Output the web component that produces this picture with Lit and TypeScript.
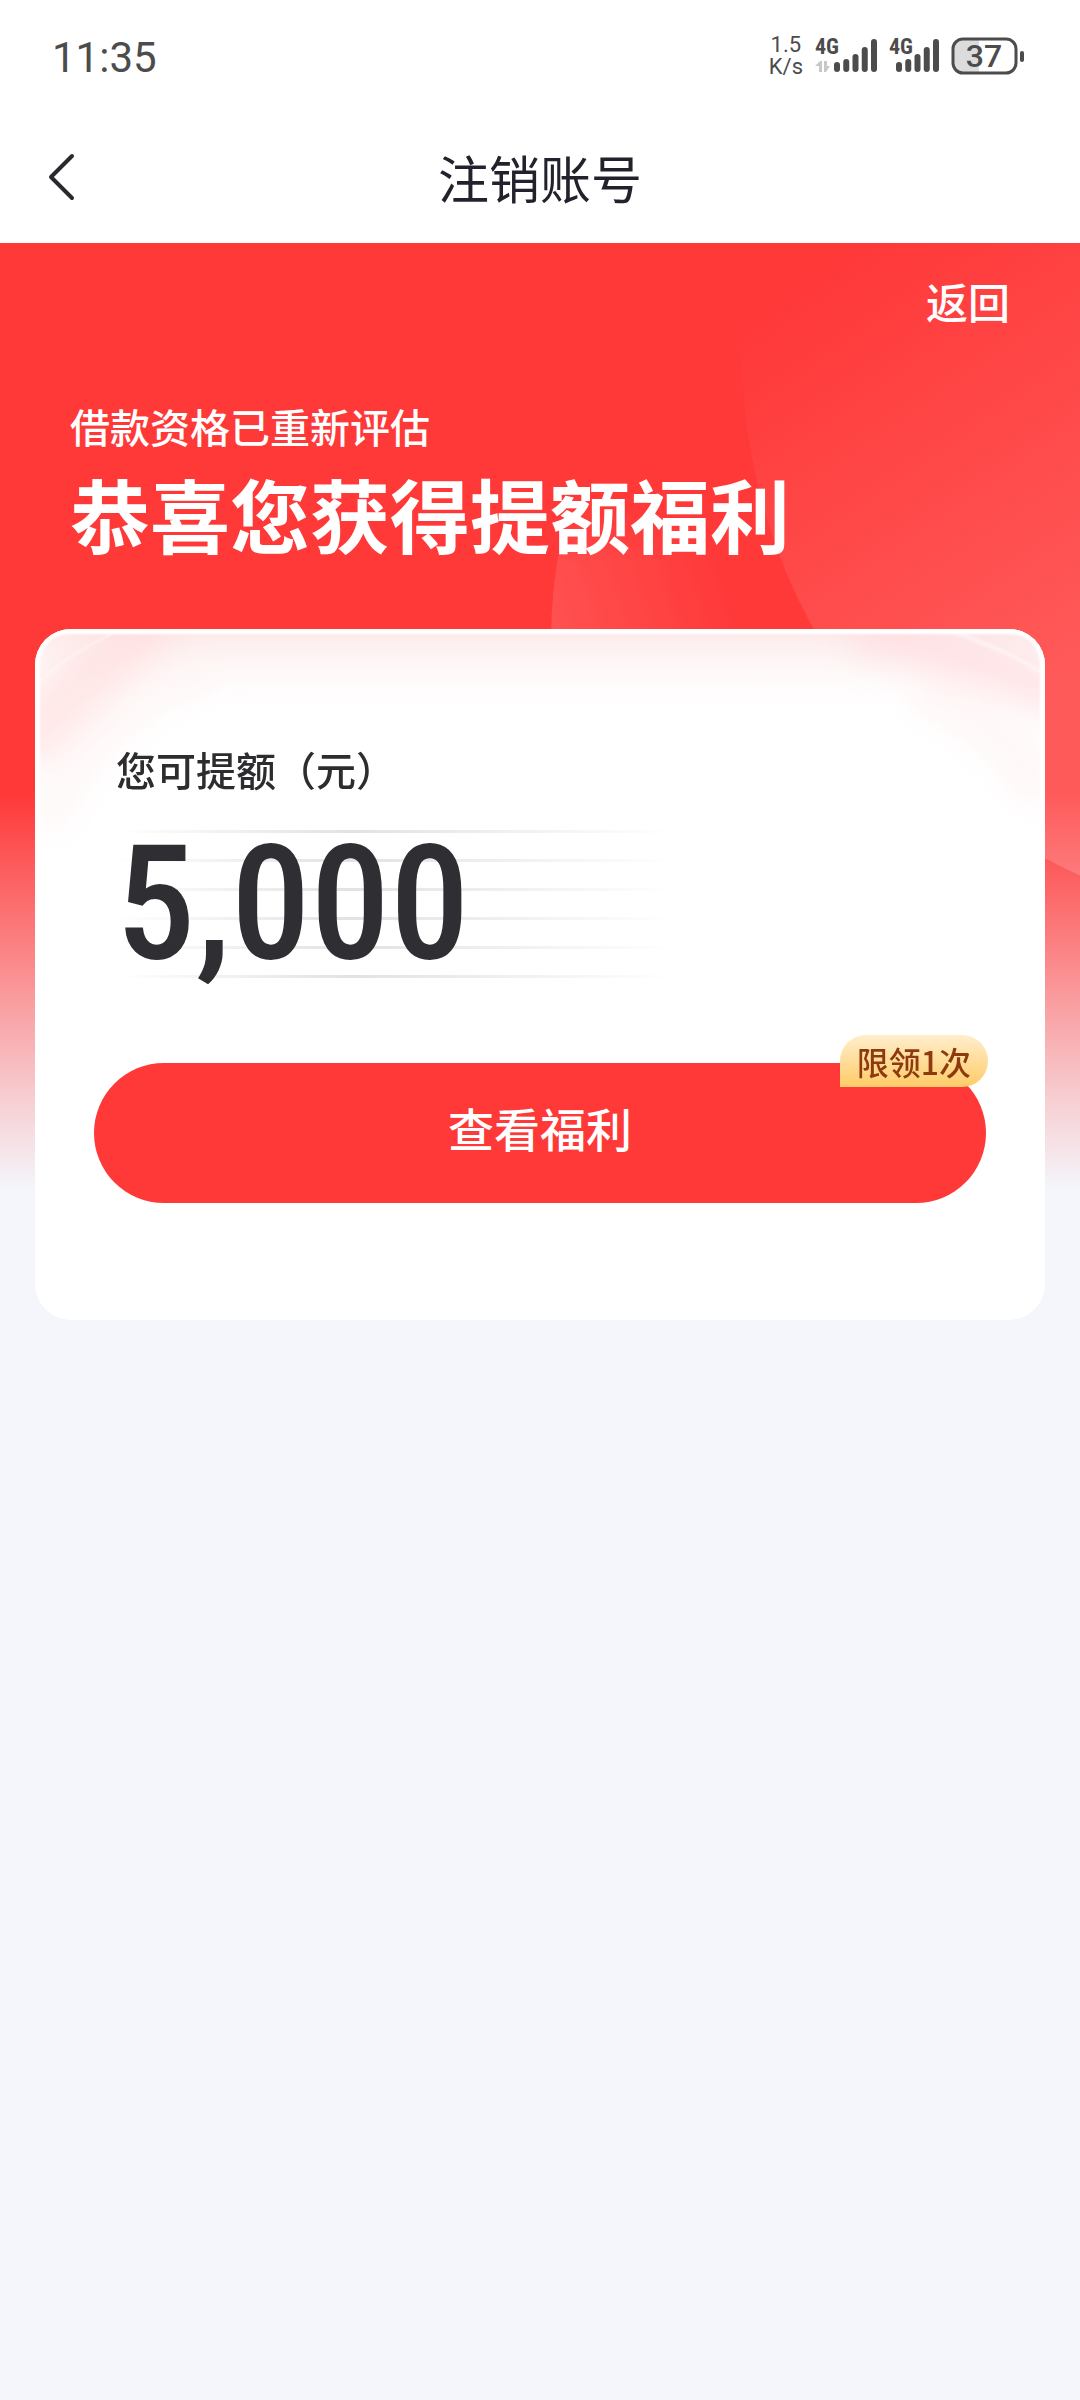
import { LitElement, html, css, svg } from "lit";
import { customElement, property } from "lit/decorators.js";

const BARS = [10, 13, 18, 25, 33];

@customElement("signal-icon")
class SignalIcon extends LitElement {
  @property({ type: Boolean }) arrows = false;

  static styles = css`
    :host {
      display: block;
    }
    .icon {
      display: block;
    }
    .label {
      font: 700 22px "Roboto Condensed", "Liberation Sans Narrow", Roboto, sans-serif;
      fill: #4c4c4c;
    }
  `;

  render() {
    const start = this.arrows ? 19 : 7;
    return html`
      <svg class="icon" width=${start + 43} height="54" aria-hidden="true">
        <text class="label" x="0" y="25">4G</text>
        ${this.arrows
          ? svg`<path d="M0 37L5 32H7V43H4V37ZM9 32H12V37H15L11 43H9Z" fill="#c8c8c8" />`
          : null}
        ${BARS.map(
          (h, i) =>
            svg`<rect x=${start + i * 9.25} y=${43 - h} width="6" height=${h} rx="3" fill="#4c4c4c" />`
        )}
      </svg>
    `;
  }
}

@customElement("status-bar")
class StatusBar extends LitElement {
  static styles = css`
    :host {
      display: flex;
      align-items: center;
      justify-content: space-between;
      height: 116px;
      padding: 0 55px 0 52px;
      box-sizing: border-box;
      background: #fff;
      color: #4c4c4c;
      font-family: Roboto, sans-serif;
    }
    .time {
      font-size: 42px;
      line-height: 48px;
    }
    .right {
      display: flex;
      align-items: center;
      gap: 12px;
      height: 112px;
      align-self: flex-start;
    }
    .speed {
      font-size: 22px;
      line-height: 22px;
      text-align: center;
    }
    .battery {
      display: block;
    }
    .level {
      font: 500 32px Roboto, sans-serif;
      fill: #4c4c4c;
    }
  `;

  render() {
    return html`
      <span class="time">11:35</span>
      <div class="right">
        <div class="speed">1.5<br />K/s</div>
        <signal-icon arrows></signal-icon>
        <signal-icon></signal-icon>
        <svg class="battery" width="74" height="38" aria-label="37%">
          <path d="M11 2H28V36H11Q2 36 2 27V11Q2 2 11 2Z" fill="#dcdcdc" />
          <rect x="2" y="2" width="63" height="34" rx="10" fill="none" stroke="#4c4c4c" stroke-width="3" />
          <rect x="69" y="14" width="4" height="11" rx="2" fill="#4c4c4c" />
          <text class="level" x="33" y="30" text-anchor="middle">37</text>
        </svg>
      </div>
    `;
  }
}

@customElement("quota-card")
class QuotaCard extends LitElement {
  @property() amount = "5,000";

  static styles = css`
    :host {
      display: block;
      position: relative;
      overflow: hidden;
      box-sizing: border-box;
      padding: 110px 59px 117px;
      border-radius: 36px;
      background: #fff;
    }
    .glow {
      position: absolute;
      inset: 0 0 auto;
      width: 100%;
      height: 260px;
    }
    .content {
      position: relative;
    }
    .label {
      margin: 0 22px;
      font-size: 40px;
      font-weight: 500;
      line-height: 60px;
      color: #2d2d2f;
    }
    .figure {
      display: grid;
      align-items: center;
      margin: 31px 22px 85px;
      height: 148px;
    }
    .rules,
    .amount {
      grid-area: 1 / 1;
    }
    .rules {
      width: 66%;
      height: 148px;
      background: repeating-linear-gradient(#e2e2e4 0 3px, transparent 3px 29px);
      -webkit-mask-image: linear-gradient(90deg, transparent, #000 42%, transparent);
      mask-image: linear-gradient(90deg, transparent, #000 42%, transparent);
    }
    .amount {
      position: relative;
      font: 500 159px/148px "Roboto Condensed", "Liberation Sans Narrow", Roboto, sans-serif;
      color: #2f2f33;
    }
    .action {
      position: relative;
    }
    .button {
      display: block;
      width: 100%;
      height: 140px;
      padding: 0 0 12px;
      border: 0;
      border-radius: 70px;
      background: #ff3838;
      color: #fff;
      font: inherit;
      font-size: 46px;
      font-weight: 500;
    }
    .badge {
      position: absolute;
      top: -28px;
      right: -2px;
      padding: 0 17px;
      border-radius: 26px 26px 26px 0;
      background: linear-gradient(#ffeecb, #ffcb68);
      color: #8f3a0c;
      font-size: 32px;
      font-weight: 500;
      line-height: 52px;
    }
  `;

  render() {
    return html`
      <svg class="glow" viewBox="0 0 1010 260" preserveAspectRatio="none" aria-hidden="true">
        <defs>
          <linearGradient id="veil" x1="0" y1="0" x2="0" y2="1">
            <stop offset="0" stop-color="#fde8e8" />
            <stop offset="1" stop-color="#fff" stop-opacity="0" />
          </linearGradient>
          <filter id="soft" x="-50%" y="-50%" width="200%" height="200%">
            <feGaussianBlur stdDeviation="16" />
          </filter>
          <filter id="fine"><feGaussianBlur stdDeviation="1" /></filter>
        </defs>
        <rect width="1010" height="92" fill="url(#veil)" />
        <g fill="none" filter="url(#soft)">
          <path d="M-20 120Q50 50 130 -20" stroke="#ffdede" stroke-width="60" opacity=".7" />
          <path d="M10 200Q50 90 170 40" stroke="#fff4f4" stroke-width="40" opacity=".6" />
          <path d="M820 0Q930 20 1030 70" stroke="#ffdcdf" stroke-width="44" opacity=".7" />
          <path d="M880 60Q970 90 1010 170" stroke="#fff2f2" stroke-width="44" opacity=".6" />
        </g>
        <g fill="none" stroke="#fff" filter="url(#fine)">
          <path d="M2 54Q30 28 78 4" stroke-width="2" opacity=".45" />
          <path d="M920 4Q970 20 1008 44" stroke-width="4" opacity=".4" />
          <path d="M2 260V38Q2 2 38 2H972Q1008 2 1008 38V260" stroke-width="6" />
        </g>
      </svg>
      <div class="content">
        <p class="label">您可提额（元）</p>
        <div class="figure">
          <div class="rules"></div>
          <span class="amount">${this.amount}</span>
        </div>
        <div class="action">
          <button class="button" type="button">查看福利</button>
          <span class="badge">限领1次</span>
        </div>
      </div>
    `;
  }
}

@customElement("app-root")
class AppRoot extends LitElement {
  static styles = css`
    :host {
      display: block;
      min-height: 100vh;
      background: #f4f6fb;
      font-family: "Noto Sans CJK SC", sans-serif;
    }
    .header {
      display: grid;
      grid-template-columns: 120px 1fr 120px;
      align-items: center;
      height: 127px;
      padding-bottom: 6px;
      box-sizing: border-box;
      background: #fff;
    }
    .back {
      display: block;
      padding: 0 0 0 46px;
      border: 0;
      background: none;
    }
    .chevron {
      display: block;
    }
    .title {
      margin: 0;
      font-size: 51px;
      font-weight: 400;
      line-height: 72px;
      text-align: center;
      color: #22222c;
    }
    .hero {
      position: relative;
      padding: 28px 35px 0;
    }
    .backdrop {
      position: absolute;
      inset: 0 0 auto;
      width: 100%;
      height: 947px;
    }
    .front {
      position: relative;
      display: flex;
      flex-direction: column;
      color: #fff;
    }
    .return {
      align-self: flex-end;
      margin-right: 35px;
      color: #fff;
      font-size: 42px;
      font-weight: 500;
      line-height: 60px;
      text-decoration: none;
    }
    .lead {
      margin: 65px 35px 8px;
      font-size: 40px;
      font-weight: 500;
      line-height: 60px;
    }
    .headline {
      margin: 0 35px 69px;
      font-size: 80px;
      font-weight: 700;
      line-height: 96px;
    }
  `;

  render() {
    return html`
      <status-bar></status-bar>
      <header class="header">
        <button class="back" type="button" aria-label="返回">
          <svg class="chevron" width="30" height="50" fill="none" stroke="#2a2a2e" stroke-width="4" stroke-linecap="round" stroke-linejoin="round">
            <path d="M26 4L5 25L26 46" />
          </svg>
        </button>
        <h1 class="title">注销账号</h1>
      </header>
      <main class="hero">
        <svg class="backdrop" viewBox="0 0 1080 947" preserveAspectRatio="none" aria-hidden="true">
          <defs>
            <linearGradient id="big" gradientUnits="userSpaceOnUse" x1="790" y1="40" x2="1060" y2="440">
              <stop offset="0" stop-color="#fff" stop-opacity="0" />
              <stop offset="1" stop-color="#fff" stop-opacity=".17" />
            </linearGradient>
            <linearGradient id="small" gradientUnits="userSpaceOnUse" x1="540" y1="410" x2="740" y2="350">
              <stop offset="0" stop-color="#fff" stop-opacity=".14" />
              <stop offset="1" stop-color="#fff" stop-opacity="0" />
            </linearGradient>
            <linearGradient id="rise" gradientUnits="userSpaceOnUse" x1="0" y1="260" x2="0" y2="320">
              <stop offset="0" stop-color="#000" />
              <stop offset="1" stop-color="#fff" />
            </linearGradient>
            <mask id="lower"><rect width="1080" height="947" fill="url(#rise)" /></mask>
            <linearGradient id="fade" x1="0" y1="0" x2="0" y2="1">
              <stop offset=".58" stop-color="#f4f6fb" stop-opacity="0" />
              <stop offset=".74" stop-color="#f5f5fa" stop-opacity=".38" />
              <stop offset=".9" stop-color="#f4f6fb" stop-opacity=".78" />
              <stop offset="1" stop-color="#f4f6fb" />
            </linearGradient>
          </defs>
          <rect width="1080" height="947" fill="#ff3838" />
          <circle cx="1051" cy="397" r="500" fill="url(#small)" mask="url(#lower)" />
          <circle cx="1318" cy="108" r="576" fill="url(#big)" />
          <rect width="1080" height="947" fill="url(#fade)" />
        </svg>
        <div class="front">
          <a class="return" href="#">返回</a>
          <p class="lead">借款资格已重新评估</p>
          <h2 class="headline">恭喜您获得提额福利</h2>
          <quota-card></quota-card>
        </div>
      </main>
    `;
  }
}
